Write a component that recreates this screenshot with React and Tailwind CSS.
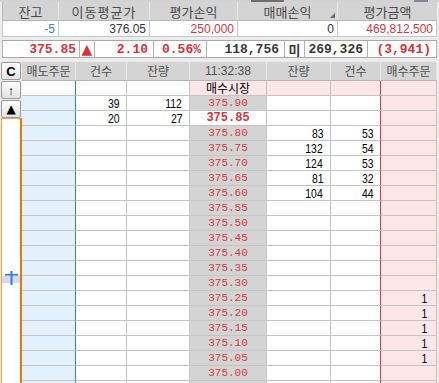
import React from "react";

const rows = [
  { p: "매수시장", kind: "market" },
  { p: "375.90", lc: "39", lq: "112" },
  { p: "375.85", lc: "20", lq: "27", cur: true },
  { p: "375.80", rq: "83", rc: "53" },
  { p: "375.75", rq: "132", rc: "54" },
  { p: "375.70", rq: "124", rc: "53" },
  { p: "375.65", rq: "81", rc: "32" },
  { p: "375.60", rq: "104", rc: "44" },
  { p: "375.55" },
  { p: "375.50" },
  { p: "375.45" },
  { p: "375.40" },
  { p: "375.35" },
  { p: "375.30" },
  { p: "375.25", b: "1" },
  { p: "375.20", b: "1" },
  { p: "375.15", b: "1" },
  { p: "375.10", b: "1" },
  { p: "375.05", b: "1" },
  { p: "375.00" },
  { p: "" },
];

function Num({ v }) {
  if (!v) return null;
  return (
    <span className="inline-block origin-right scale-x-[0.8] text-[13px] leading-none text-black font-['Liberation_Sans',sans-serif]">
      {v}
    </span>
  );
}

function Row({ r }) {
  const market = r.kind === "market";
  return (
    <div className="flex h-[15px]">
      <div
        className={
          market
            ? "w-[54px] h-[15px] border-b border-b-[#c4c4c4] border-r border-r-[#2f80e8] bg-white"
            : "w-[54px] h-[15px] border-b border-b-[#c4c4c4] border-r border-r-[#2f80e8] bg-[#e4f0fc]"
        }
      />
      <div className="w-[51px] h-[15px] border-b border-r border-[#c4c4c4] bg-white flex items-center justify-end pr-[7px]">
        <Num v={r.lc} />
      </div>
      <div className="w-[63px] h-[15px] border-b border-r border-[#c4c4c4] bg-white flex items-center justify-end pr-[7px]">
        <Num v={r.lq} />
      </div>
      {market ? (
        <div className="w-[77px] h-[15px] border-b border-r border-[#c4c4c4] bg-[#fde6e8] flex items-center justify-center text-[12px] leading-none text-black font-['Noto_Sans_CJK_KR',sans-serif]">
          {r.p}
        </div>
      ) : r.cur ? (
        <div className="w-[77px] h-[15px] border-b border-r border-[#c4c4c4] bg-white flex items-center justify-center text-[12px] leading-none font-bold text-[#d8323a] font-['Liberation_Mono',monospace]">
          {r.p}
        </div>
      ) : (
        <div className="w-[77px] h-[15px] border-b border-r border-[#c4c4c4] bg-[#d4d4d4] flex items-center justify-center text-[11px] leading-none text-[#d83a42] font-['Liberation_Mono',monospace]">
          {r.p}
        </div>
      )}
      <div
        className={
          market
            ? "w-[64px] h-[15px] border-b border-r border-[#c4c4c4] bg-[#fde6e8] flex items-center justify-end pr-[7px]"
            : "w-[64px] h-[15px] border-b border-r border-[#c4c4c4] bg-white flex items-center justify-end pr-[7px]"
        }
      >
        <Num v={r.rq} />
      </div>
      <div
        className={
          market
            ? "w-[50px] h-[15px] border-b border-b-[#c4c4c4] border-r border-r-[#d0404c] bg-[#fde6e8] flex items-center justify-end pr-[7px]"
            : "w-[50px] h-[15px] border-b border-b-[#c4c4c4] border-r border-r-[#d0404c] bg-white flex items-center justify-end pr-[7px]"
        }
      >
        <Num v={r.rc} />
      </div>
      <div className="w-[56px] h-[15px] border-b border-r border-[#c4c4c4] bg-[#fde6e8] flex items-center justify-end pr-[9px]">
        <Num v={r.b} />
      </div>
    </div>
  );
}

export default function App() {
  return (
    <div className="w-[439px] h-[383px] overflow-hidden bg-[#ececec] font-['Liberation_Sans','Noto_Sans_CJK_KR',sans-serif]">
      {/* tab strip */}
      <div className="flex h-[2px] bg-[#d2d2d2]">
        <div className="w-[251px]" />
        <div className="w-[33px] bg-[#6e6e6e]" />
        <div className="w-[130px]" />
        <div className="w-[14px] bg-[#8a8296]" />
      </div>

      {/* summary table */}
      <div className="ml-[2px] w-[435px]">
        <div className="flex h-[19px] bg-[#d4d4d4] border-b border-[#b8b8b8] text-[13px] leading-none text-[#4a4a4a] font-['Noto_Sans_CJK_KR',sans-serif]">
          <div className="w-[57px] border-l border-l-[#b8b8b8] border-r border-r-[#e8e8e8] flex items-center justify-center">잔고</div>
          <div className="w-[91px] border-r border-[#e8e8e8] flex items-center justify-center tracking-[1px]">이동평균가</div>
          <div className="w-[88px] border-r border-[#e8e8e8] flex items-center justify-center">평가손익</div>
          <div className="relative w-[100px] border-r border-[#e8e8e8] flex items-center justify-center">
            매매손익
            <div className="absolute right-[2px] bottom-[2px] w-0 h-0 border-l-[5px] border-l-transparent border-b-[5px] border-b-[#6a6a6a]" />
          </div>
          <div className="w-[99px] flex items-center justify-center">평가금액</div>
        </div>
        <div className="flex h-[16px] bg-white text-[12px] leading-none">
          <div className="w-[57px] border-l border-b border-r border-[#c8c8c8] flex items-center justify-end pr-[3px] text-[#2f7fe0]">-5</div>
          <div className="w-[91px] border-b border-r border-[#c8c8c8] flex items-center justify-end pr-[3px] text-[#333]">376.05</div>
          <div className="w-[88px] border-b border-r border-[#c8c8c8] flex items-center justify-end pr-[3px] text-[#d8363e]">250,000</div>
          <div className="w-[100px] border-b border-r border-[#c8c8c8] flex items-center justify-end pr-[3px] text-[#333]">0</div>
          <div className="w-[99px] border-b border-r border-[#c8c8c8] flex items-center justify-end pr-[3px] text-[#d8363e]">469,812,500</div>
        </div>
      </div>

      {/* price bar */}
      <div className="mt-[3px] ml-[2px] w-[435px] flex h-[18px] bg-white border-y border-[#a8a8a8] text-[13px] leading-none font-bold font-['Liberation_Mono',monospace]">
        <div className="w-[78px] border-l border-r border-[#b4b4b4] flex items-center justify-end pr-[3px] text-[#d8323a]">375.85</div>
        <div className="w-[15px] border-r border-[#b4b4b4] flex items-center justify-center text-[#d8323a] text-[14px] font-['DejaVu_Sans',sans-serif]">▲</div>
        <div className="w-[59px] border-r border-[#b4b4b4] flex items-center justify-end pr-[5px] text-[#d8323a]">2.10</div>
        <div className="w-[53px] border-r border-[#b4b4b4] flex items-center justify-end pr-[5px] text-[#d8323a]">0.56%</div>
        <div className="w-[78px] border-r border-[#b4b4b4] flex items-center justify-end pr-[5px] text-[#3a3a3a]">118,756</div>
        <div className="w-[20px] border-r border-[#b4b4b4] flex items-center justify-center text-[#3a3a3a] font-['Noto_Sans_CJK_KR',sans-serif] text-[13px]">미</div>
        <div className="w-[63px] border-r border-[#b4b4b4] flex items-center justify-end pr-[4px] text-[#3a3a3a]">269,326</div>
        <div className="w-[69px] border-r border-[#b4b4b4] flex items-center justify-end pr-[5px] text-[#d8323a]">(3,941)</div>
      </div>

      {/* order book */}
      <div className="mt-[4px] flex">
        {/* left control column */}
        <div className="ml-[1px] w-[21px] h-[321px] flex flex-col">
          <div className="h-[18px] w-[20px] rounded-[2px] border border-[#9a9a9a] bg-gradient-to-b from-white to-[#e2e2e2] flex items-center justify-center text-[13px] font-bold leading-none text-black">C</div>
          <div className="mt-[1px] h-[18px] w-[20px] rounded-[2px] border border-[#9a9a9a] bg-gradient-to-b from-white to-[#e2e2e2] flex items-center justify-center text-[13px] leading-none text-black">↑</div>
          <div className="mt-[1px] h-[18px] w-[20px] rounded-[2px] border border-[#9a9a9a] bg-gradient-to-b from-white to-[#e2e2e2] flex items-center justify-center text-[12px] leading-none text-black font-['DejaVu_Sans',sans-serif]">▲</div>
          <div className="flex-1 bg-white border-l border-l-[#f2a548] border-r-2 border-r-[#e67a06] border-t border-t-[#f2a548]">
            <div className="mt-[152px] relative h-[14px]">
              <div className="absolute left-0 right-0 top-[5px] h-[7px] bg-[#ddd6f0]" />
              <svg className="absolute left-[3px] top-0" width="13" height="14" viewBox="0 0 13 14">
                <rect x="5.5" y="0" width="2" height="14" fill="#2f7fe0" />
                <rect x="0" y="3" width="13" height="1.6" fill="#2f7fe0" />
              </svg>
            </div>
          </div>
        </div>

        {/* main table */}
        <div className="w-[415px]">
          <div className="flex h-[19px] bg-[#d4d4d4] border-b border-[#b4b4b4] text-[12px] leading-none text-[#505050] font-['Noto_Sans_CJK_KR',sans-serif]">
            <div className="w-[54px] border-r border-[#e6e6e6] flex items-center justify-center">매도주문</div>
            <div className="w-[51px] border-r border-[#e6e6e6] flex items-center justify-center">건수</div>
            <div className="w-[63px] border-r border-[#e6e6e6] flex items-center justify-center">잔량</div>
            <div className="w-[77px] border-r border-[#e6e6e6] flex items-center justify-center font-['Liberation_Sans',sans-serif]">11:32:38</div>
            <div className="w-[64px] border-r border-[#e6e6e6] flex items-center justify-center">잔량</div>
            <div className="w-[50px] border-r border-[#e6e6e6] flex items-center justify-center">건수</div>
            <div className="w-[56px] border-r border-[#e6e6e6] flex items-center justify-center">매수주문</div>
          </div>
          {rows.map((r, i) => (
            <Row key={i} r={r} />
          ))}
        </div>
      </div>
    </div>
  );
}
